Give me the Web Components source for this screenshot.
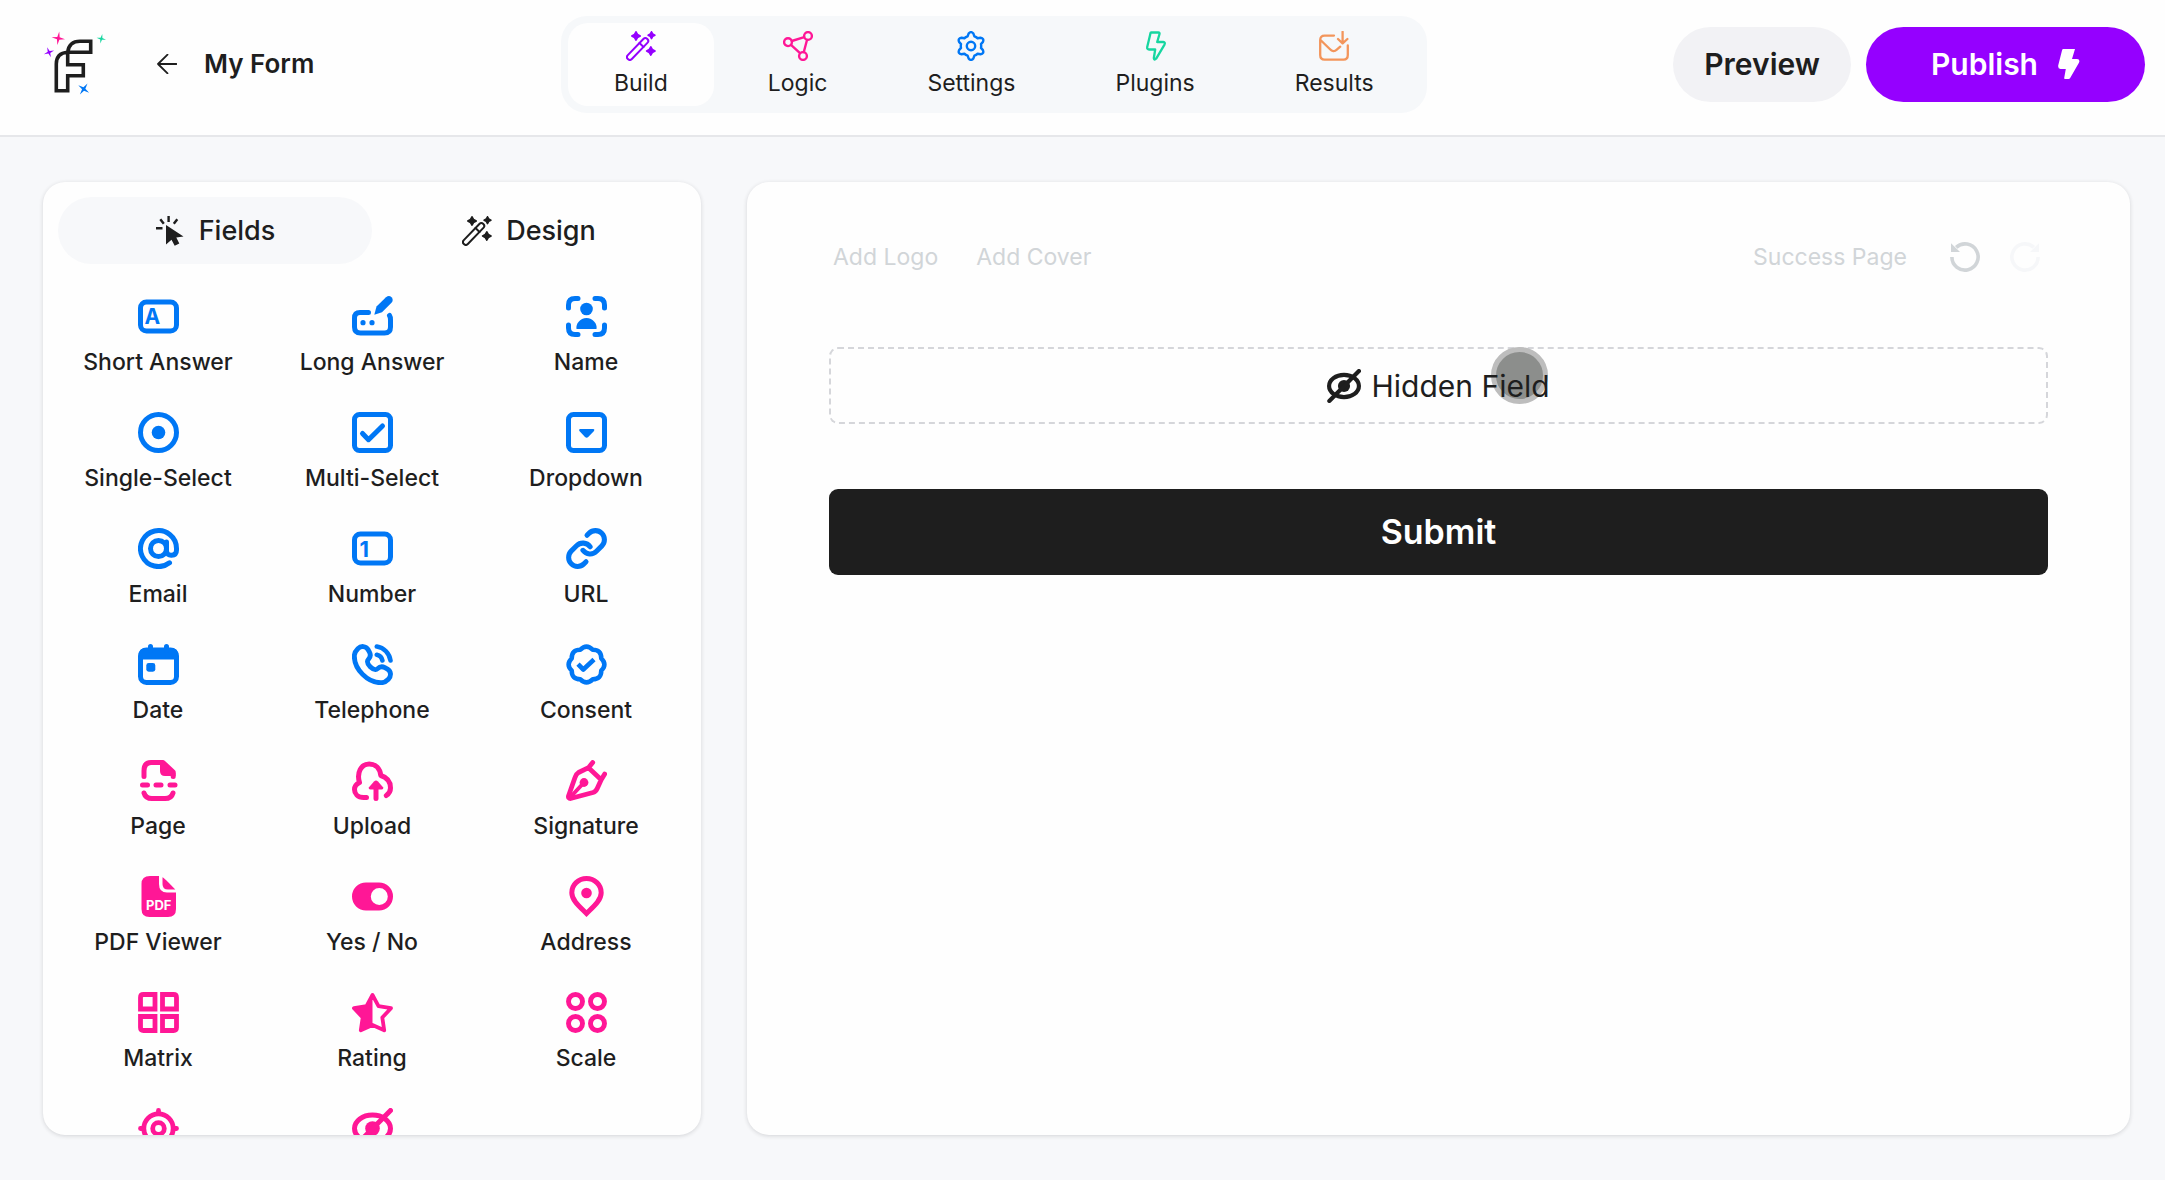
<!DOCTYPE html>
<html lang="en">
<head>
<meta charset="utf-8">
<title>My Form</title>
<style>
  html, body { margin: 0; height: 100%; }
  body {
    --ink: #1e1e1e; --surface: #fefefe; --page: #f7f8fa;
    --purple: #9500ff; --pink: #ff1796; --blue: #0077f5; --green: #16d6a0; --orange: #f3955b;
    font-family: Inter, "Liberation Sans", sans-serif; color: var(--ink); background: var(--page);
  }
</style>
</head>
<body>
<form-builder></form-builder>
<script>
const rotate = (x, y, deg) => {
  const a = deg * Math.PI / 180;
  return (x * Math.cos(a) - y * Math.sin(a)).toFixed(2) + ' ' + (x * Math.sin(a) + y * Math.cos(a)).toFixed(2);
};
const star4 = (cx, cy, r, deg, k, fill) => {
  let d = '';
  for (let i = 0; i < 4; i++) {
    d += (i ? 'L' : 'M') + rotate(0, -r, i * 90) + 'L' + rotate(k, -k, i * 90);
  }
  return `<path fill="${fill || 'currentColor'}" stroke="${fill ? 'none' : 'currentColor'}" stroke-width="1.6" stroke-linejoin="round" transform="translate(${cx} ${cy}) rotate(${deg})" d="${d}Z"/>`;
};
const gear = () => {
  let d = 'M' + rotate(-3.4, -9.6, 0);
  for (let i = 0; i < 6; i++) {
    const a = i * 60;
    d += 'L' + rotate(-2.4, -12.4, a) + 'Q' + rotate(0, -15.4, a) + ' ' + rotate(2.4, -12.4, a) + 'L' + rotate(3.4, -9.6, a)
       + 'Q' + rotate(5.2, -9, a) + ' ' + rotate(-3.4, -9.6, a + 60);
  }
  return d + 'Z';
};
const scallop = () => {
  let d = 'M' + rotate(0, -16, -22.5);
  for (let i = 0; i < 8; i++) d += 'Q' + rotate(0, -21, i * 45) + ' ' + rotate(0, -16, i * 45 + 22.5);
  return d + 'Z';
};
const wand = `<rect x="-14" y="-2.8" width="28" height="5.6" rx="2.8" transform="translate(11.6 18) rotate(-46)"/><path d="M13.5 12l4 4"/>`
  + star4(10, 5, 4.2, 0, 1.5) + star4(25.5, 4.2, 3.4, 0, 1.2) + star4(24.8, 20, 4.2, 0, 1.5);
const solid = 'fill="currentColor" stroke="none"';
const glyph = 'fill="currentColor" stroke="none" font-family="Inter, sans-serif" font-weight="700"';

/* name: [viewBox width, viewBox height, stroke width, markup] */
const ICONS = {
  wand: [30, 30, 2, wand],
  logic: [30, 30, 2.4, '<circle cx="5" cy="11.2" r="3.9"/><circle cx="25" cy="5" r="3.9"/><circle cx="20" cy="25" r="3.9"/><path d="M8.8 10l12.4-3.8M8 13.8l9 8.4M24 9l-3.2 12"/>'],
  gear: [30, 30, 2.4, `<g transform="translate(15 15)"><circle r="4.2"/><path d="${gear()}"/></g>`],
  bolt: [30, 30, 2.3, '<path d="M11.2 1.5h7.2q1.5 0 1.1 1.5l-2.3 8h6q2.4.4 1.3 2.6l-8.3 14q-2 2.3-2.4-.4l1.4-8.7h-6q-2.4-.3-2-2.4l3-12.6q.2-2 1-2z"/>'],
  inbox: [30, 30, 2.3, '<path d="M15 4.6H5.6Q1.2 4.6 1.2 9v15q0 4.6 4.4 4.6h19q4.2 0 4.2-4.6v-9.500M1.500 9l9.300 9q3.600 4 7 .7l3.400-3M23.600.8v11.500M19 8l4.600 4.400L28.400 8"/>'],
  boltSolid: [22, 30, 1, `<path ${solid} d="M5 0h12l-3 10h5q3.600.4 1.800 4L12 29.200q-.5.8-1.400.8H7q-1 0-.8-1l1.600-9H2.500Q-.2 19.600.2 16.500L4 1.500Q4.200 0 5 0z"/>`],
  back: [20, 20, 1.8, '<path d="M19.500 10H1M10.500.7L1 10l9.500 9.300"/>'],
  cursor: [28, 30, 1, `<path ${solid} d="M10 9l17.500 11.500-7.200 1 3 6-4.600 2.300-3.200-6L10 28.500z"/><path stroke-width="2.4" stroke-linecap="butt" d="M12.600 0v6M4.300 3.200l3.500 4.600M21.300 3.200l-3.500 4.600M0 12.200h6.500"/>`],
  undo: [30, 30, 3.6, `<path stroke-linecap="butt" d="M1.900 15a13.100 13.100 0 1 0 4.300-9.700"/><path ${solid} d="M1 1.200V10h9z"/>`],
  redo: [30, 30, 3.6, `<path stroke-linecap="butt" d="M28.100 15a13.100 13.100 0 1 1-4.300-9.700"/><path ${solid} d="M29 1.200V10h-9z"/>`],
  short: [41, 41, 5, `<rect x="2.500" y="6" width="36" height="29" rx="6"/><text ${glyph} x="6.500" y="28" font-size="21">A</text>`],
  long: [41, 41, 5, `<path d="M16.500 16.500H8q-5.500 0-5.500 5.500v9q0 6 6 6h24q6 0 6-6v-7q0-3-1-4.500"/><path ${solid} d="M22.300 18.700l2.200-8.200L34 1.200q3-2.400 5.500 0 2.400 2.600 0 5.500L30 16.200z"/><circle ${solid} cx="11" cy="26.700" r="2.600"/><circle ${solid} cx="20" cy="26.700" r="2.600"/>`],
  name: [41, 41, 5, `<path d="M2.500 12V9q0-6.500 6.500-6.500h3M29 2.500h3q6.500 0 6.500 6.500v3M38.500 29v3q0 6.500-6.500 6.500h-3M12 38.500H9q-6.500 0-6.500-6.500v-3"/><circle ${solid} cx="20.500" cy="13" r="6.300"/><path ${solid} d="M10.500 33c-1-5 3.500-11 10-11s11 6 10 11z"/>`],
  single: [41, 41, 5, `<circle cx="20.500" cy="20.500" r="18"/><circle ${solid} cx="20.500" cy="20.500" r="6.800"/>`],
  multi: [41, 41, 5, '<rect x="2.500" y="2.500" width="36" height="36" rx="5"/><path d="M10.500 21.500l6 6.200 14-13.700"/>'],
  dropdown: [41, 41, 5, `<rect x="2.500" y="2.500" width="36" height="36" rx="5"/><path ${solid} d="M14 17h13.500q1.600.4.500 2l-5.800 6q-1.500 1.600-3.200 0L13.400 19q-1-1.500.6-2z"/>`],
  email: [41, 41, 5, '<circle cx="20.500" cy="20.500" r="8"/><path d="M28.500 14v9.500q1 4 5 3.800 5-.3 5-5.300v-1.500a18 18 0 1 0-7 14.300"/>'],
  number: [41, 41, 5, `<rect x="2.500" y="6" width="36" height="29" rx="6"/><text ${glyph} x="7.500" y="28.500" font-size="22">1</text>`],
  url: [41, 41, 2.800, '<g transform="scale(1.800) translate(-.6 -.6)"><path d="M10 13a5 5 0 0 0 7.540.540l3-3a5 5 0 0 0-7.070-7.070l-1.200 1.200M14 11a5 5 0 0 0-7.540-.540l-3 3a5 5 0 0 0 7.070 7.070l1.200-1.200"/></g>'],
  date: [41, 41, 5, `<rect x="2.500" y="6" width="36" height="32.500" rx="6"/><path ${solid} d="M1 15.500V10q0-6 7-6h25q7 0 7 6v5.500z"/><path d="M12.500 2.500V6M28.500 2.500V6"/><rect ${solid} x="8.300" y="19" width="9" height="8.700" rx="2.400"/>`],
  phone: [41, 41, 5, '<g transform="translate(-6.700 -6.500) scale(2.260)" stroke-width="2.150"><path d="M10.040 5.320L10.690 6.480C11.270 7.530 11.040 8.900 10.110 9.830C10.110 9.830 9 10.950 11.020 12.980C13.050 15 14.170 13.890 14.170 13.890C15.090 12.960 16.470 12.730 17.520 13.310L18.680 13.960C20.270 14.850 20.460 17.070 19.060 18.460C18.230 19.300 17.200 19.950 16.070 19.990C14.160 20.070 10.920 19.580 7.670 16.330C4.420 13.080 3.930 9.840 4.010 7.930C4.050 6.800 4.700 5.770 5.540 4.940C6.930 3.540 9.150 3.730 10.040 5.320Z"/></g><path stroke-width="4.600" d="M24.800 2.500C32 3.500 37.500 9.500 38.500 16.500M24.800 10.800q4.600 1 5.600 5.700"/>'],
  consent: [41, 41, 4.600, `<path transform="translate(20.500 20.500)" d="${scallop()}"/><path stroke-linecap="butt" d="M12 20.200l5.300 5.300 10.700-10"/>`],
  page: [41, 41, 5, `<path d="M6 16.500V11q0-8.500 7-8.500h12l10.200 9.500v4.500M6 33q1.500 5.500 8 5.500h13q6.500 0 8-5.500M4.500 25h5M18 25h5M32 25h5"/><path ${solid} d="M22 1h4l11.500 12v3H27q-5 0-5-5z"/>`],
  upload: [41, 41, 5, `<path d="M14.500 37.500h-2.700C5.500 37.500 2.500 33.500 2.500 29.500q0-4.500 5-7C4.500 13 9 4 17.200 4 23.500 4 28 8.500 28.800 15.500c6.500 2 9.700 7 9.700 12.500 0 3.500-1.500 5.700-4.200 7.500M24 38.500V28"/><path ${solid} d="M24 20.500q1 0 2 1l5 5.800q.8 2.200-1.500 2.200h-11q-2.300 0-1.500-2.200l5-5.800q1-1 2-1z"/>`],
  signature: [41, 41, 4.800, `<path d="M26.700 2.500l-4.200 5.200 12.700 12 3.500-5.700M22.500 7.700l-10 4.800q-2.500 1.500-3.500 5L2.500 36q-.5 2.500 2 2.500l22.500-6q3-1 4.200-4l4-8.800"/><circle ${solid} cx="18" cy="22.500" r="4.400"/><path stroke-width="4" d="M18 22.500L5 36.500"/>`],
  pdf: [41, 41, 5, `<path ${solid} d="M12 0h9v8q0 8.500 8 8.500h9V33q0 8-8 8H11.500q-8 0-8-8V8q0-8 8.500-8z"/><path ${solid} d="M24.500 1.200q1 0 12.800 12.300H30q-5.500 0-5.500-5.500z"/><text x="20.700" y="34" font-size="13" font-family="Inter, sans-serif" font-weight="700" text-anchor="middle" fill="#fefefe" stroke="none">PDF</text>`],
  toggle: [41, 41, 5, `<path ${solid} fill-rule="evenodd" d="M14 6.500h13a14 14 0 0 1 0 28H14a14 14 0 0 1 0-28zM27.300 12a8.500 8.500 0 1 0 0 17 8.500 8.500 0 0 0 0-17z"/>`],
  pin: [41, 41, 5, `<path stroke-linejoin="miter" d="M20.500 37.500C14 31 5.800 24.500 5.800 16.700a14.700 14.200 0 0 1 29.400 0C35.200 24.500 27 31 20.500 37.500z"/><circle ${solid} cx="20.500" cy="17" r="5.300"/>`],
  matrix: [41, 41, 4.800, '<path stroke-linejoin="miter" d="M17 17V2.500H5.500q-3 0-3 3V17zM24.500 17V2.500H35.500q3 0 3 3V17zM17 24.500V38.500H5.500q-3 0-3-3V24.500zM24.500 24.500V38.500H35.500q3 0 3-3V24.500z"/>'],
  rating: [41, 41, 3.800, `<path d="M20.500 3l6 11.200 12.500 2-8.700 9.300 1.900 12.800L20.500 33 8.800 38.300l1.900-12.800L2 16.200l12.500-2z"/><path ${solid} d="M20.500 3v30L8.800 38.300l1.900-12.800L2 16.200l12.500-2z"/>`],
  scale: [41, 41, 4.900, '<circle cx="9.500" cy="9.500" r="7"/><circle cx="31.500" cy="9.500" r="7"/><circle cx="9.500" cy="31.500" r="7"/><circle cx="31.500" cy="31.500" r="7"/>'],
  target: [41, 41, 4.800, '<circle cx="20.500" cy="20.500" r="14.700"/><circle cx="20.500" cy="20.500" r="5.800"/><path d="M20.500 2.500v3M2.500 20.500h3M38.500 20.500h-3M20.500 38.500v-3"/>'],
  hidden: [41, 41, 5, `<ellipse cx="20.500" cy="20.500" rx="18" ry="13.500"/><circle ${solid} cx="20.500" cy="20.500" r="7.300"/><path d="M38.500 2.500L2.800 38.500"/>`],
  logo: [64, 66, 3.600, `<g transform="translate(-43 -32)"><path stroke-linejoin="miter" stroke-linecap="butt" d="M67.700 53.300Q56.300 54 56.300 65V91.700H67.700V76.700H83.300V65.700H67.700V53.300Q69 42.300 80 42.300H90.700V53.300z"/>`
    + star4(58.300, 39.300, 6.800, 8, 1.200, '#ff1796') + star4(49, 53.300, 5.400, -20, 1, '#9500ff') + star4(101.300, 39.700, 4.800, 12, .9, '#16d6a0') + star4(83.700, 90, 6.600, 35, 1.200, '#0077f5') + '</g>'],
};

const define = (name, markup, setup) => customElements.define(name, class extends HTMLElement {
  constructor() {
    super();
    const template = document.createElement('template');
    template.innerHTML = markup;
    this.attachShadow({ mode: 'open' }).append(template.content.cloneNode(true));
  }
  connectedCallback() {
    if (this.ready) return;
    this.ready = true;
    if (setup) setup(this, this.shadowRoot);
  }
});
const prependIcon = (host, root) => {
  const icon = document.createElement('ui-icon');
  icon.setAttribute('name', host.getAttribute('icon'));
  root.querySelector('button').prepend(icon);
};

define('ui-icon', `<style>
  :host { display: block; flex: none; }
  svg { display: block; width: 100%; height: 100%; }
</style>`, (host, root) => {
  const [w, h, stroke, body] = ICONS[host.getAttribute('name')];
  const t = document.createElement('template');
  t.innerHTML = `<svg viewBox="0 0 ${w} ${h}" aria-hidden="true" fill="none" stroke="currentColor" stroke-width="${stroke}" stroke-linecap="round" stroke-linejoin="round">${body}</svg>`;
  root.append(t.content);
});

define('nav-tab', `<style>
  :host { display: block; }
  button { display: flex; flex-direction: column; align-items: center; gap: 6px; padding: 8px 46px 7px; border: 0; border-radius: 20px;
    background: none; font: 400 23px/32px Inter, sans-serif; color: inherit; cursor: pointer; }
  :host([active]) button { background: var(--surface); }
  ui-icon { width: 30px; height: 30px; color: var(--tone); }
</style><button type="button"><slot></slot></button>`, prependIcon);

define('pill-button', `<style>
  :host { display: block; }
  button { display: flex; align-items: center; gap: 20px; height: 75px; padding: 0 31px; border: 0; border-radius: 38px;
    background: #f2f2f5; color: var(--ink); font: 600 30px/36px Inter, sans-serif; cursor: pointer; }
  :host([primary]) button { padding: 0 65px; background: var(--purple); color: #fff; }
</style><button type="button"><slot></slot></button>`);

define('app-header', `<style>
  :host { display: flex; align-items: center; justify-content: space-between; box-sizing: border-box; height: 137px;
    padding: 0 20px 7px 43px; background: var(--surface); border-bottom: 2px solid #e6e7ea; }
  .title, .actions { display: flex; align-items: center; }
  .actions { gap: 15px; }
  .logo { width: 64px; height: 66px; }
  a { display: flex; margin-left: 50px; color: inherit; }
  .back { width: 20px; height: 20px; }
  h1 { margin: 0 0 0 27px; font: 600 26px/32px Inter, sans-serif; }
  nav { display: flex; gap: 8px; padding: 7px; border-radius: 26px; background: #f6f8fa; }
  .flash { width: 22px; height: 30px; }
</style>
<div class="title"><ui-icon class="logo" name="logo"></ui-icon><a href="#" aria-label="Back"><ui-icon class="back" name="back"></ui-icon></a><h1>My Form</h1></div>
<nav>
  <nav-tab active icon="wand" style="--tone:var(--purple)">Build</nav-tab>
  <nav-tab icon="logic" style="--tone:var(--pink)">Logic</nav-tab>
  <nav-tab icon="gear" style="--tone:var(--blue)">Settings</nav-tab>
  <nav-tab icon="bolt" style="--tone:var(--green)">Plugins</nav-tab>
  <nav-tab icon="inbox" style="--tone:var(--orange)">Results</nav-tab>
</nav>
<div class="actions"><pill-button>Preview</pill-button><pill-button primary>Publish<ui-icon class="flash" name="boltSolid"></ui-icon></pill-button></div>`);

define('panel-card', `<style>
  :host { display: block; box-sizing: border-box; min-width: 0; overflow: hidden; border-radius: 22px; background: var(--surface);
    box-shadow: 0 1px 4px rgba(30, 30, 40, .16); }
</style><slot></slot>`);

define('field-tile', `<style>
  :host { display: block; }
  button { display: flex; flex-direction: column; align-items: center; gap: 9px; width: 100%; height: 116px; padding: 0; border: 0;
    background: none; font: 500 23px/32px Inter, sans-serif; color: var(--ink); white-space: nowrap; cursor: grab; }
  ui-icon { width: 41px; height: 41px; color: var(--tone); }
</style><button type="button"><slot></slot></button>`, prependIcon);

define('field-palette', `<style>
  :host { display: flex; flex-direction: column; padding: 15px 15px 0; }
  .tabs { display: grid; grid-template-columns: 1fr 1fr; }
  .tabs button { display: flex; align-items: center; justify-content: center; gap: 14px; height: 67px; border: 0; border-radius: 34px;
    background: none; font: 500 27px/34px Inter, sans-serif; color: inherit; cursor: pointer; }
  .tabs button[aria-selected=true] { background: #f7f8fa; }
  .tabs ui-icon { width: 30px; height: 30px; }
  .grid { display: grid; grid-template-columns: repeat(3, 1fr); margin: 32px -7px 0; }
  .basic { --tone: var(--blue); } .extra { --tone: var(--pink); margin-top: 0; }
</style>
<div class="tabs" role="tablist">
  <button type="button" role="tab" aria-selected="true"><ui-icon name="cursor"></ui-icon>Fields</button>
  <button type="button" role="tab" aria-selected="false"><ui-icon name="wand"></ui-icon>Design</button>
</div>
<div class="grid basic">
  <field-tile icon="short">Short Answer</field-tile><field-tile icon="long">Long Answer</field-tile><field-tile icon="name">Name</field-tile>
  <field-tile icon="single">Single-Select</field-tile><field-tile icon="multi">Multi-Select</field-tile><field-tile icon="dropdown">Dropdown</field-tile>
  <field-tile icon="email">Email</field-tile><field-tile icon="number">Number</field-tile><field-tile icon="url">URL</field-tile>
  <field-tile icon="date">Date</field-tile><field-tile icon="phone">Telephone</field-tile><field-tile icon="consent">Consent</field-tile>
</div>
<div class="grid extra">
  <field-tile icon="page">Page</field-tile><field-tile icon="upload">Upload</field-tile><field-tile icon="signature">Signature</field-tile>
  <field-tile icon="pdf">PDF Viewer</field-tile><field-tile icon="toggle">Yes / No</field-tile><field-tile icon="pin">Address</field-tile>
  <field-tile icon="matrix">Matrix</field-tile><field-tile icon="rating">Rating</field-tile><field-tile icon="scale">Scale</field-tile>
  <field-tile icon="target" aria-label="Target"></field-tile><field-tile icon="hidden" aria-label="Hidden"></field-tile>
</div>`);

define('form-canvas', `<style>
  :host { display: block; padding: 58px 82px; }
  .bar { display: flex; align-items: center; height: 34px; padding: 0 8px 0 4px; color: #d1d5d8; }
  .bar button { padding: 0; border: 0; background: none; color: inherit; font: 400 23px/34px Inter, sans-serif; cursor: pointer; }
  .left { display: flex; gap: 38px; flex: 1; }
  .right { display: flex; align-items: center; gap: 30px; }
  .right .page { margin-right: 13px; }
  .bar ui-icon { width: 30px; height: 30px; }
  .bar .redo { color: #f6f7f9; }
  .block { position: relative; display: flex; align-items: center; justify-content: center; gap: 10px; box-sizing: border-box; height: 77px;
    margin-top: 73px; border: 2px dashed #d5d6da; border-radius: 9px; font: 400 30px/40px Inter, sans-serif; }
  .block ui-icon { width: 34px; height: 34px; }
  .label { position: relative; z-index: 1; }
  .touch { position: absolute; left: calc(50% + 52px); top: -2px; box-sizing: border-box; width: 57px; height: 57px; border-radius: 50%;
    background: #8c8e8c; border: 5px solid #bdbdbd; }
  .submit { display: block; width: 100%; height: 86px; margin-top: 65px; border: 0; border-radius: 9px; background: #1e1e1e; color: #fff;
    font: 600 34px/44px Inter, sans-serif; cursor: pointer; }
</style>
<div class="bar">
  <div class="left"><button type="button">Add Logo</button><button type="button">Add Cover</button></div>
  <div class="right"><button type="button" class="page">Success Page</button>
    <button type="button" aria-label="Undo"><ui-icon name="undo"></ui-icon></button>
    <button type="button" class="redo" aria-label="Redo"><ui-icon name="redo"></ui-icon></button></div>
</div>
<div class="block"><ui-icon name="hidden"></ui-icon><span class="label">Hidden Field</span><span class="touch"></span></div>
<button type="submit" class="submit">Submit</button>`);

define('form-builder', `<style>
  :host { display: flex; flex-direction: column; height: 100vh; }
  main { display: grid; grid-template-columns: 658px 1fr; grid-template-rows: 100%; gap: 46px; flex: 1; min-height: 0; box-sizing: border-box; padding: 45px 35px 45px 43px; }
</style>
<app-header></app-header>
<main><panel-card><field-palette></field-palette></panel-card><panel-card><form-canvas></form-canvas></panel-card></main>`);
</script>
</body>
</html>
